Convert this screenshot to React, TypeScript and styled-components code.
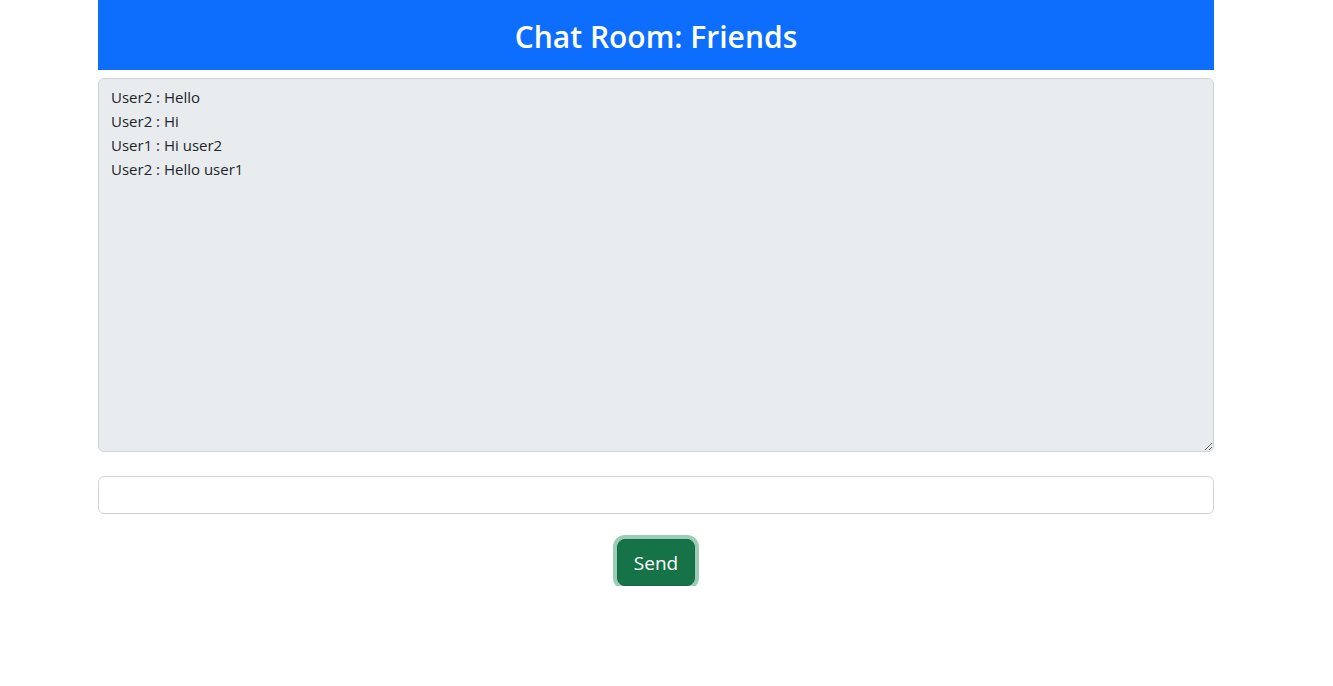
import { createGlobalStyle } from 'styled-components';
import styled from 'styled-components';

const messages = ['User2 : Hello', 'User2 : Hi', 'User1 : Hi user2', 'User2 : Hello user1'];

const GlobalStyle = createGlobalStyle`
  body {
    margin: 0;
    background: #ffffff;
    font-family: 'Open Sans', 'Noto Sans', sans-serif;
    color: #212529;
  }
`;

const App = () => {
  return (
    <>
      <GlobalStyle />
      <Container>
        <Header>
          <Title>Chat Room: Friends</Title>
        </Header>
        <Log readOnly value={messages.join('\n')} />
        <MessageInput type="text" />
        <Actions>
          <SendButton type="button">Send</SendButton>
        </Actions>
      </Container>
    </>
  );
};

export default App;

const Container = styled.div`
  width: 1116px;
  margin-left: 98px;
  display: flex;
  flex-direction: column;
`;

const Header = styled.div`
  height: 70px;
  box-sizing: border-box;
  padding-top: 4px;
  background-color: #0d6efd;
  display: flex;
  align-items: center;
  justify-content: center;
`;

const Title = styled.h1`
  margin: 0;
  color: #ffffff;
  font-size: 30px;
  font-weight: 600;
  line-height: 1.2;
`;

const Log = styled.textarea`
  margin-top: 8px;
  height: 374px;
  box-sizing: border-box;
  padding: 6px 12px;
  background-color: #e9ecef;
  border: 1px solid #ced4da;
  border-radius: 6px;
  font-family: 'Open Sans', 'Noto Sans', sans-serif;
  font-size: 15px;
  line-height: 24px;
  color: #212529;
  outline: none;
  resize: vertical;
`;

const MessageInput = styled.input`
  margin-top: 24px;
  height: 38px;
  box-sizing: border-box;
  padding: 6px 12px;
  border: 1px solid #ced4da;
  border-radius: 6px;
  font-size: 16px;
  outline: none;
`;

const Actions = styled.div`
  display: flex;
  justify-content: center;
  margin-top: 25px;
`;

const SendButton = styled.button`
  height: 47px;
  width: 78px;
  padding: 0;
  background-color: #157347;
  border: 1px solid #146c43;
  border-radius: 8px;
  box-shadow: 0 0 0 4px rgba(60, 153, 110, 0.5);
  color: #ffffff;
  font-family: 'Open Sans', 'Noto Sans', sans-serif;
  font-size: 19px;
  cursor: pointer;
`;
